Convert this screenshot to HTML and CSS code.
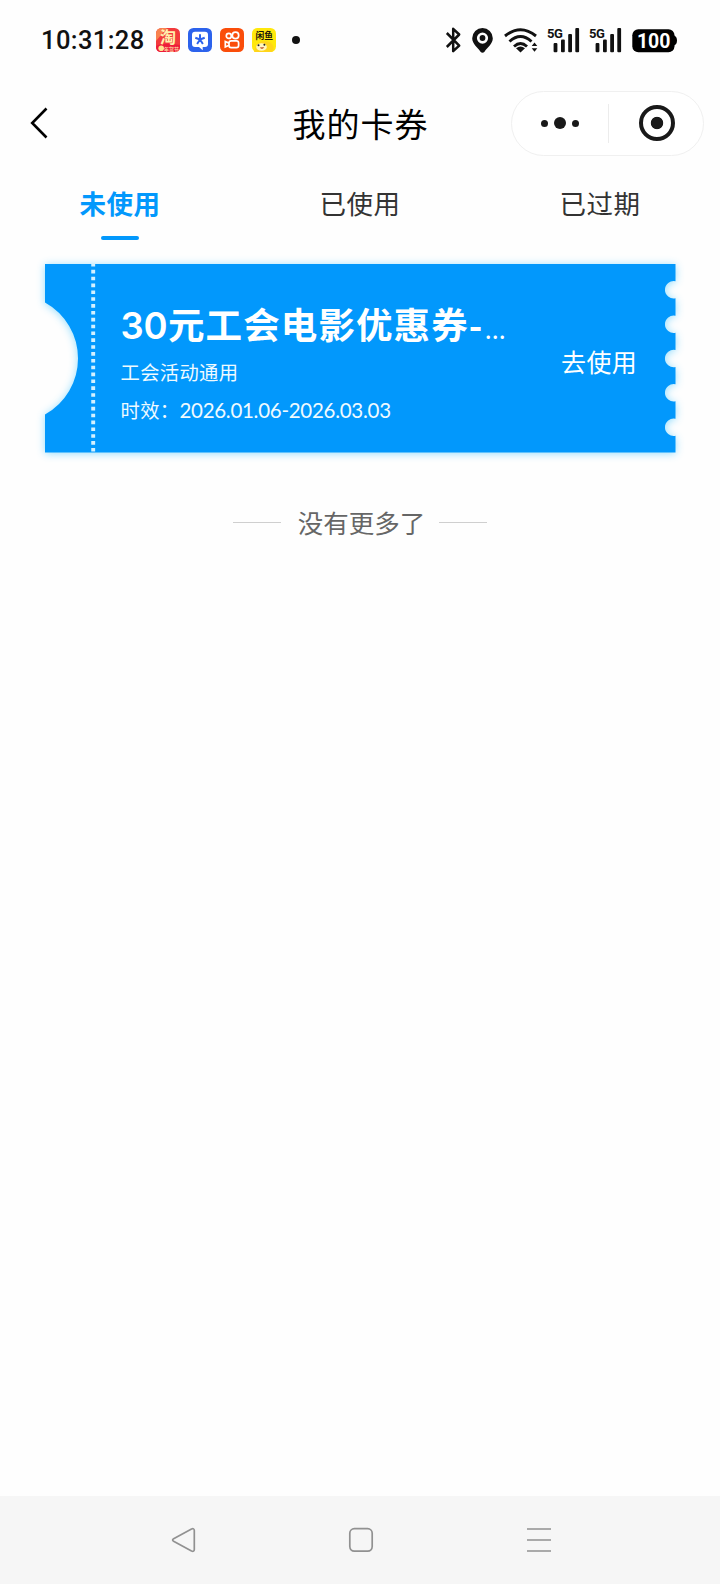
FILE: index.html
```html
<!DOCTYPE html>
<html lang="zh-CN">
<head>
<meta charset="utf-8">
<title>我的卡券</title>
<link rel="stylesheet" href="styles.css">
</head>
<body>
<div class="screen">
  <div class="status">
    <div class="status-left">
      <span class="clock">10:31:28</span>
      <div class="apps">
        <svg width="24" height="24" viewBox="0 0 24 24">
          <rect width="24" height="24" rx="5.5" fill="#f23a3c"/>
          <path d="M0 6Q0 0 6 0H11L0 13Z" fill="#f8834f"/>
          <path d="M0 18q7-4 24-1v2q0 5-5 5H5q-5 0-5-5z" fill="#ee1c3a"/>
          <text class="glyph" x="12" y="15" font-size="16" fill="#fff0ad">淘</text>
          <circle cx="5.2" cy="20.2" r="2.8" fill="#ffe28e"/>
          <text class="glyph" x="15.5" y="22.5" font-size="5" fill="#ffd9a0">年货节</text>
        </svg>
        <svg width="24" height="24" viewBox="0 0 24 24">
          <rect width="24" height="24" rx="5.5" fill="#2c62ec"/>
          <path d="M7 3.700H17Q20 3.700 20 6.700V16Q20 19 17 19H14.7V22.3L11 19H7Q4 19 4 16V6.700Q4 3.700 7 3.700Z" fill="#fff"/>
          <path d="M12 11.500V6.300M12 11.500L7.300 9.800M12 11.500L16.700 9.800M12 11.500L9.100 16M12 11.500L14.900 16" stroke="#2c62ec" stroke-width="2"/>
        </svg>
        <svg width="24" height="24" viewBox="0 0 24 24">
          <rect width="24" height="24" rx="5.5" fill="#fa4d0a"/>
          <g fill="none" stroke="#fff" stroke-width="1.700">
            <circle cx="8.800" cy="7.900" r="2.500"/><circle cx="15.5" cy="7.4" r="3.2"/>
            <rect x="9" y="12.8" width="9.6" height="6.8" rx="2.2"/>
            <path d="M9 15.1L5.300 13.5V18.9L9 17.2"/>
          </g>
        </svg>
        <svg width="24" height="24" viewBox="0 0 24 24">
          <rect width="24" height="24" rx="5.5" fill="#ffe80c"/>
          <text class="glyph" x="12.3" y="10.800" font-size="8.8" fill="#17140a">闲鱼</text>
          <path d="M2 24Q4 13 12 13T21.500 19Q22 22 20 24Z" fill="#ffd51a"/>
          <ellipse cx="9.500" cy="19" rx="5.300" ry="3.800" fill="#fff6c0"/>
          <circle cx="6.5" cy="17.300" r="1" fill="#222"/><circle cx="12.4" cy="16.800" r="1" fill="#222"/>
          <path d="M7.800 19.500Q10 22.300 12.200 19.300Z" fill="#b33b18"/>
        </svg>
      </div>
      <span class="more-dot"></span>
    </div>
    <svg class="status-right" width="240" height="32" viewBox="440 24 240 32">
      <path d="M446.800 33L459.200 45.600L453.200 51.200V28.800L459.200 34.500L446.800 47" fill="none" stroke="#111" stroke-width="2.500" stroke-linejoin="round"/>
      <path fill="#111" fill-rule="evenodd" d="M482.500 28a10.300 10.300 0 0 1 10.300 10.300c0 5.500-5.300 9-8.300 13.500q-2 2-4 0c-3-4.500-8.300-8-8.300-13.500a10.300 10.300 0 0 1 10.300-10.300zm0 4.500a5.600 5.600 0 1 0 0 11.200a5.600 5.600 0 0 0 0-11.200z"/>
      <circle cx="482.500" cy="38" r="2.900" fill="#111"/>
      <g fill="none" stroke="#111" stroke-width="2.900">
        <path d="M505 36Q520.500 23.500 536 36"/><path d="M509.500 41.500Q520.500 31.500 531.500 41.500"/><path d="M514 46.500Q520.500 40.500 527 46.500"/>
      </g>
      <path d="M516 48.300Q520.500 44.800 525 48.300L520.500 52.600ZM531.700 46L534.500 42.500L537.300 46ZM531.700 48.300H537.300L534.500 51.800Z" fill="#111"/>
      <g id="signal" fill="#111">
        <text x="547" y="37.600" class="net">5G</text>
        <rect x="553.600" y="43" width="3.800" height="9.300" rx="1"/><rect x="561" y="39.500" width="3.800" height="12.800" rx="1"/><rect x="568.200" y="34" width="3.800" height="18.300" rx="1"/><rect x="575.300" y="28" width="3.800" height="24.300" rx="1"/>
      </g>
      <use href="#signal" x="42"/>
      <rect x="632.300" y="29.200" width="42.200" height="23" rx="6" fill="#000"/>
      <path d="M674 35.500q3 1 3 5t-3 5z" fill="#000"/>
      <text x="653.700" y="47.800" class="level">100</text>
    </svg>
  </div>

  <header class="navbar">
    <svg class="back" width="18" height="32" viewBox="0 0 18 32"><path d="M16.500 1.500L2.200 16L16.500 30.500" fill="none" stroke="#000" stroke-width="2.600"/></svg>
    <h1 class="title">我的卡券</h1>
    <div class="capsule">
      <div class="cap-half"><i class="dot"></i><i class="dot big"></i><i class="dot"></i></div>
      <i class="cap-line"></i>
      <div class="cap-half"><i class="ring"></i></div>
    </div>
  </header>

  <nav class="tabs">
    <div class="tab active">未使用</div>
    <div class="tab">已使用</div>
    <div class="tab">已过期</div>
  </nav>

  <section class="ticket">
    <svg class="ticket-bg" width="631" height="189" viewBox="0 0 631 189">
      <path fill="#0298fc" d="M0 0H630.500V17.300A8.700 8.700 0 1 0 630.500 34.300V51.700A8.700 8.700 0 1 0 630.500 68.700V86A8.700 8.700 0 1 0 630.500 103V120.300A8.700 8.700 0 1 0 630.500 137.300V154.700A8.700 8.700 0 1 0 630.500 171.700V188.500H0V150.500A64 64 0 0 0 0 38.500Z"/>
      <path d="M48.200 0V188.500" stroke="#d3f1ff" stroke-width="3.900" stroke-dasharray="3.600 3.250" stroke-dashoffset="1"/>
    </svg>
    <div class="info">
      <div class="name"><span class="num">30</span>元工会电影优惠券<span class="dash">-</span><span class="ell">...</span></div>
      <div class="desc">工会活动通用</div>
      <div class="desc">时效：<span class="date">2026.01.06-2026.03.03</span></div>
    </div>
    <div class="go">去使用</div>
  </section>

  <div class="end"><i class="rule"></i><span class="end-text">没有更多了</span><i class="rule"></i></div>

  <footer class="sysnav">
    <svg width="26" height="26" viewBox="0 0 26 26"><path d="M2.600 11.700L20.500 2Q23.200 1 23.300 3.500V22.500Q23.200 25 20.500 24L2.600 14.300Q.6 13 2.600 11.700Z"/></svg>
    <svg width="26" height="26" viewBox="0 0 26 26"><rect x="1.800" y="1.700" width="22.400" height="22.400" rx="4.500"/></svg>
    <svg width="26" height="26" viewBox="0 0 26 26"><path d="M1 2H25M1 13H25M1 24H25"/></svg>
  </footer>
</div>
</body>
</html>
```
FILE: styles.css
```css
* { box-sizing: border-box; }
body { margin: 0; background: #fff; }
.screen {
  width: 720px;
  height: 1584px;
  display: flex;
  flex-direction: column;
  overflow: hidden;
  background: #fefefe;
  color: #111;
  font-family: "Noto Sans CJK SC", sans-serif;
}
i { display: block; }
svg { display: block; flex: none; overflow: visible; }

.status { height: 80px; display: flex; justify-content: space-between; padding-right: 40px; align-items: center; }
.status-left { display: flex; align-items: center; padding-left: 41px; }
.clock { width: 114.5px; font: 500 25.5px/30px Roboto, sans-serif; letter-spacing: .4px; white-space: nowrap; }
.apps { display: flex; gap: 8.2px; }
.glyph { font-family: "Noto Sans CJK SC", sans-serif; font-weight: 700; text-anchor: middle; }
.more-dot { width: 8px; height: 8px; margin-left: 15.500px; border-radius: 50%; background: #111; }
.net { font: 700 13px Roboto, sans-serif; letter-spacing: -.5px; }
.level { font: 700 19.5px Roboto, sans-serif; fill: #fff; text-anchor: middle; }

.navbar { height: 86px; display: grid; grid-template-columns: 1fr auto 1fr; align-items: center; padding: 0 16px 0 30px; }
.title { margin: 0; position: relative; left: -6.500px; font-size: 33px; font-weight: 400; line-height: 48px; letter-spacing: 1px; color: #000; }
.capsule { justify-self: end; width: 193px; height: 65px; display: flex; align-items: center; border: 1px solid #f0f0f0; border-radius: 33px; background: #fff; }
.cap-half { flex: 1; display: flex; align-items: center; justify-content: center; gap: 6px; }
.cap-half:first-child { flex: 0 0 95.500px; padding-left: 1px; }
.cap-half:last-child { padding-left: 3px; }
.dot { width: 7px; height: 7px; border-radius: 50%; background: #191919; }
.dot.big { width: 12px; height: 12px; }
.cap-line { width: 1px; height: 39px; background: #ececec; }
.ring { width: 36px; height: 36px; border: 4.500px solid #191919; border-radius: 50%; background: radial-gradient(circle, #191919 5.8px, #fff 6.6px); }

.tabs { height: 98px; display: grid; grid-template-columns: repeat(3, 1fr); padding-top: 17px; }
.tab { display: flex; flex-direction: column; align-items: center; font-size: 26.5px; line-height: 40px; letter-spacing: .5px; color: #333; }
.active { color: #0298fc; font-weight: 700; }
.active::after { content: ""; width: 38px; height: 4px; margin-top: 13px; border-radius: 2px; background: #0298fc; }

.ticket { position: relative; width: 631px; height: 189px; margin-left: 44.5px; display: flex; justify-content: space-between; padding: 35.500px 38.500px 0 76px; color: #fff; }
.ticket-bg { position: absolute; inset: 0; filter: drop-shadow(0 1px 4px rgba(2, 176, 252, .42)); }
.info, .go { position: relative; white-space: nowrap; }
.name { height: 54.500px; font-size: 36.5px; line-height: 48px; font-weight: 700; letter-spacing: 1.100px; }
.num { display: inline-block; width: 47.500px; font-family: Inter, sans-serif; font-size: 36.500px; font-weight: 600; letter-spacing: -.3px; }
.dash { display: inline-block; width: 16px; }
.ell { font-size: 25px; font-weight: 400; letter-spacing: 0; }
.desc { height: 37.500px; font-size: 19.300px; line-height: 37.500px; letter-spacing: .35px; color: #effaff; }
.date { font-family: Lato, "Noto Sans", sans-serif; font-size: 20.500px; letter-spacing: -.28px; }
.go { margin-top: 42px; font-size: 25px; line-height: 38px; letter-spacing: .3px; }

.end { margin-top: 50px; display: flex; justify-content: center; align-items: center; gap: 15px; }
.rule { width: 48px; height: 1px; margin-top: 1px; background: #cfcfcf; }
.end-text { position: relative; left: 1.500px; font-size: 25.500px; line-height: 38px; color: #666; }

.sysnav { height: 88px; margin-top: auto; display: flex; justify-content: center; align-items: center; gap: 151.500px; padding-left: 2px; background: #f6f6f6; }
.sysnav svg { fill: none; stroke: #919191; stroke-width: 1.700; }
```
